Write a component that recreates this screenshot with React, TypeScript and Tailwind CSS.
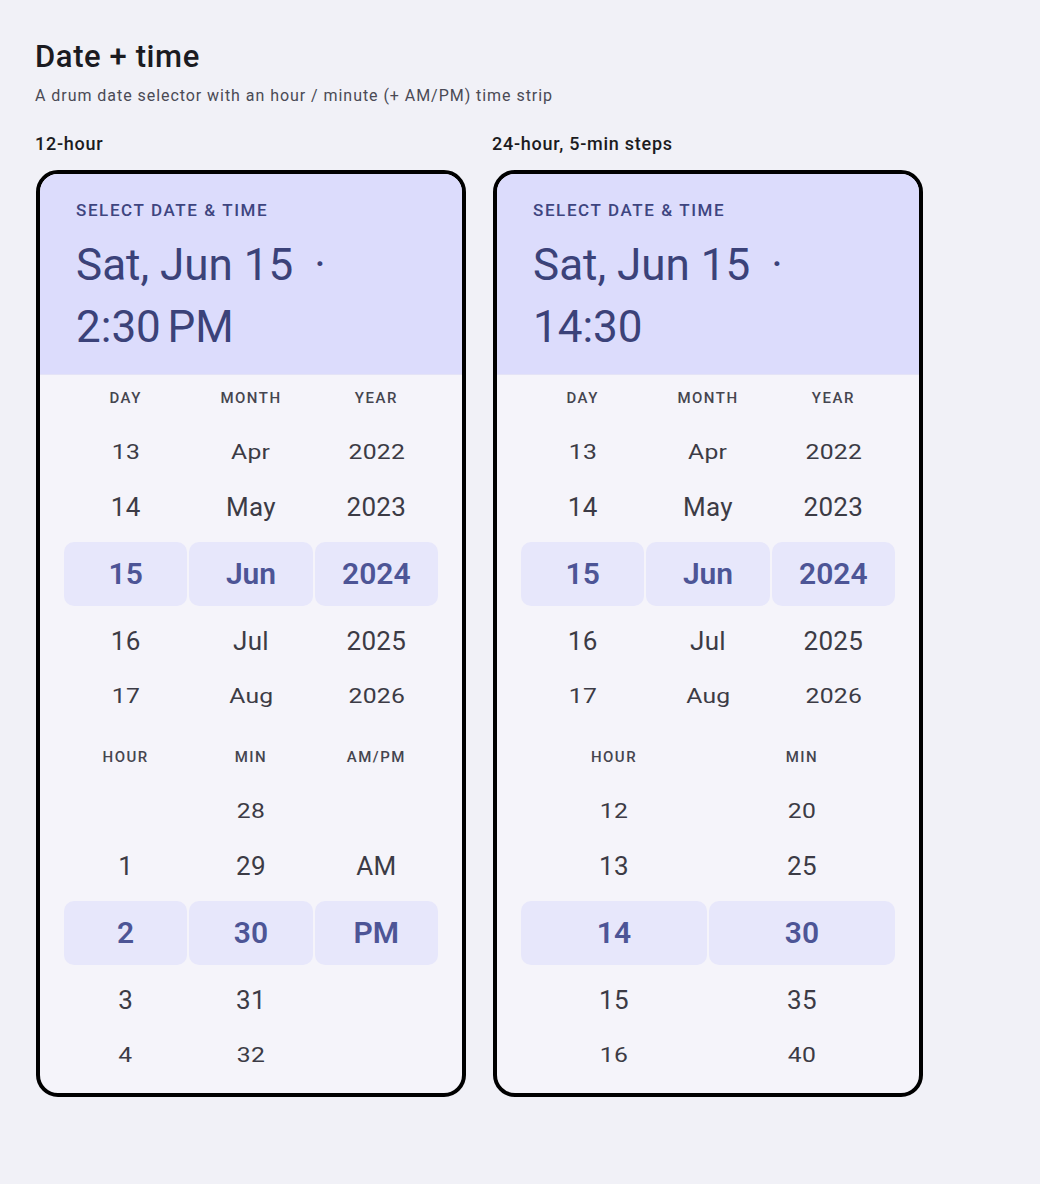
import React from "react";

type Col = { label: string; items: (string | null)[] };

function Item({ value, offset }: { value: string | null; offset: number }) {
  if (offset === 0) {
    return (
      <div className="flex h-16 items-center justify-center rounded-[10px] bg-[#e7e7fb]">
        <span className="text-[30px] font-semibold leading-none text-[#4d5596]">{value ?? ""}</span>
      </div>
    );
  }
  let cls = "";
  if (offset === -2) cls = "translate-y-[6px] scale-x-[0.95] scale-y-[0.75]";
  if (offset === -1) cls = "-translate-y-[3px]";
  if (offset === 1) cls = "translate-y-[3px]";
  if (offset === 2) cls = "-translate-y-[6px] scale-x-[0.95] scale-y-[0.75]";
  return (
    <div className="flex h-16 items-center justify-center">
      <span className={`text-[26px] leading-none tracking-[0.3px] text-[#3c3b45] ${cls}`}>{value ?? ""}</span>
    </div>
  );
}

function Drum({ cols }: { cols: Col[] }) {
  const gridCls = cols.length === 3 ? "grid grid-cols-3 gap-x-[2px]" : "grid grid-cols-2 gap-x-[2px]";
  return (
    <div className="px-6">
      <div className={gridCls}>
        {cols.map((c) => (
          <div key={c.label} className="flex flex-col">
            <div className="pt-[15px] pb-[8px] text-center text-[15px] font-medium leading-4 tracking-[0.1em] text-[#45454f]">
              {c.label}
            </div>
            {c.items.map((v, i) => (
              <Item key={i} value={v} offset={i - 2} />
            ))}
          </div>
        ))}
      </div>
    </div>
  );
}

function Card({ time, timeCols }: { time: React.ReactNode; timeCols: Col[] }) {
  const dateCols: Col[] = [
    { label: "DAY", items: ["13", "14", "15", "16", "17"] },
    { label: "MONTH", items: ["Apr", "May", "Jun", "Jul", "Aug"] },
    { label: "YEAR", items: ["2022", "2023", "2024", "2025", "2026"] },
  ];
  return (
    <div className="w-[430px] overflow-hidden rounded-[22px] border-4 border-black bg-[#f5f4fa]">
      <div className="border-b border-[#e4e3f6] bg-[#dcdcfc] px-9 pt-6 pb-4">
        <div className="text-[17px] font-medium leading-6 tracking-[1.6px] text-[#3e4580]">
          SELECT DATE &amp; TIME
        </div>
        <div className="mt-3 text-[44px] leading-[62px] text-[#3b4279]">
          Sat, Jun 15<span className="ml-[21px] inline-block">·</span>
          <br />
          {time}
        </div>
      </div>
      <Drum cols={dateCols} />
      <Drum cols={timeCols} />
    </div>
  );
}

export default function App() {
  const cols12: Col[] = [
    { label: "HOUR", items: [null, "1", "2", "3", "4"] },
    { label: "MIN", items: ["28", "29", "30", "31", "32"] },
    { label: "AM/PM", items: [null, "AM", "PM", null, null] },
  ];
  const cols24: Col[] = [
    { label: "HOUR", items: ["12", "13", "14", "15", "16"] },
    { label: "MIN", items: ["20", "25", "30", "35", "40"] },
  ];
  return (
    <div className="min-h-screen bg-[#f1f1f7] px-[35px] pt-[39px] font-['Roboto',sans-serif]">
      <h1 className="text-[31px] font-medium leading-9 tracking-[0.6px] text-[#1b1b21]">Date + time</h1>
      <p className="mt-[9px] text-[16px] leading-6 tracking-[0.95px] text-[#4a4a55]">
        A drum date selector with an hour / minute (+ AM/PM) time strip
      </p>
      <div className="mt-6 flex gap-[27px] pl-px">
        <div className="flex flex-col">
          <div className="-ml-px text-[18px] font-medium leading-6 tracking-[0.75px] text-[#1b1b21]">12-hour</div>
          <div className="mt-[14px]">
            <Card
              time={
                <>
                  2:30<span className="ml-[0.15em]">PM</span>
                </>
              }
              timeCols={cols12}
            />
          </div>
        </div>
        <div className="flex flex-col">
          <div className="-ml-px text-[18px] font-medium leading-6 tracking-[0.75px] text-[#1b1b21]">
            24-hour, 5-min steps
          </div>
          <div className="mt-[14px]">
            <Card time={<>14:30</>} timeCols={cols24} />
          </div>
        </div>
      </div>
    </div>
  );
}
